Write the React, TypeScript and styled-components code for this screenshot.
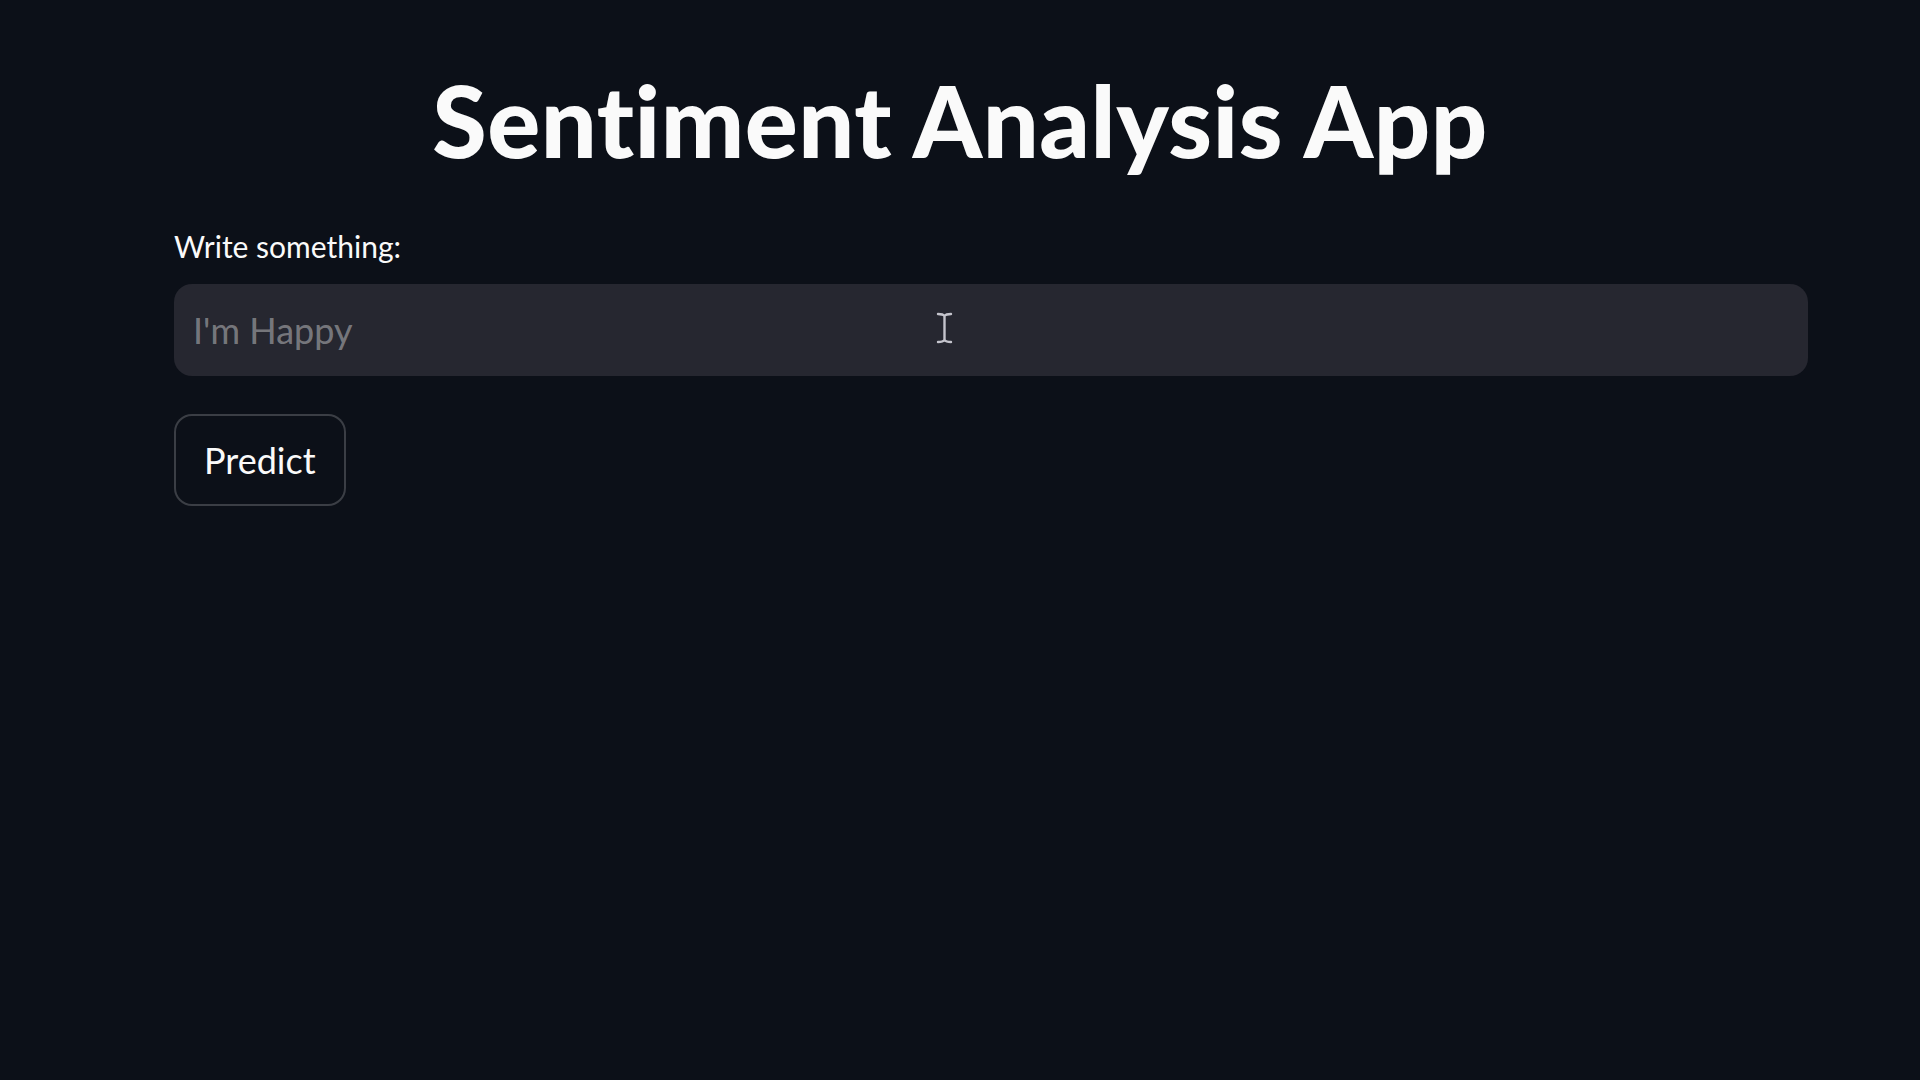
import { useState } from "react";
import styled, { createGlobalStyle } from "styled-components";

const GlobalStyle = createGlobalStyle`
    html, body {
        margin: 0;
        padding: 0;
        background-color: #0c1018;
    }

    body {
        font-family: Lato, "Noto Sans", "Liberation Sans", sans-serif;
        color: #fafafa;
    }
`;

const Page = styled.div`
    min-height: 1080px;
    background-color: #0c1018;
    display: flex;
    flex-direction: column;
`;

const Title = styled.h1`
    margin: 0;
    padding-top: 70px;
    height: 128px;
    box-sizing: border-box;
    text-align: center;
    font-size: 99px;
    font-weight: 900;
    line-height: 1;
    letter-spacing: 0.5px;
    color: #fafafa;
`;

const Content = styled.div`
    display: flex;
    flex-direction: column;
    padding: 0 112px 0 174px;
`;

const Label = styled.label`
    margin-top: 100px;
    font-size: 30px;
    line-height: 36px;
    color: #fafafa;
`;

const InputWrap = styled.div`
    position: relative;
    margin-top: 20px;
`;

const TextInput = styled.input`
    width: 100%;
    height: 92px;
    box-sizing: border-box;
    border: none;
    border-radius: 18px;
    background-color: #262730;
    padding: 0 19px;
    font-family: inherit;
    font-size: 36px;
    color: #fafafa;
    outline: none;

    &::placeholder {
        color: rgba(250, 250, 250, 0.4);
    }
`;

const Cursor = styled.svg`
    position: absolute;
    left: 762px;
    top: 28px;
    pointer-events: none;
`;

const Button = styled.button`
    align-self: flex-start;
    margin-top: 38px;
    height: 92px;
    padding: 0 28px;
    border: 2px solid rgba(250, 250, 250, 0.2);
    border-radius: 18px;
    background-color: #0c1018;
    font-family: inherit;
    font-size: 36px;
    color: #fafafa;
    cursor: pointer;
`;

const App = () => {
    const [text, setText] = useState("");

    return (
        <Page>
            <GlobalStyle />
            <Title>Sentiment Analysis App</Title>
            <Content>
                <Label htmlFor="sentiment-input">Write something:</Label>
                <InputWrap>
                    <TextInput
                        id="sentiment-input"
                        placeholder="I'm Happy"
                        value={text}
                        onChange={(e) => setText(e.target.value)}
                    />
                    <Cursor width="17" height="32" viewBox="0 0 17 32">
                        <path d="M2 2c3 0 5 0 6.5 2C10 2 12 2 15 2M8.5 4v24M2 30c3 0 5 0 6.5-2 1.5 2 3.5 2 6.5 2" fill="none" stroke="#c4c4cc" strokeWidth="2.4" strokeLinecap="round" />
                    </Cursor>
                </InputWrap>
                <Button>Predict</Button>
            </Content>
        </Page>
    );
};

export default App;
